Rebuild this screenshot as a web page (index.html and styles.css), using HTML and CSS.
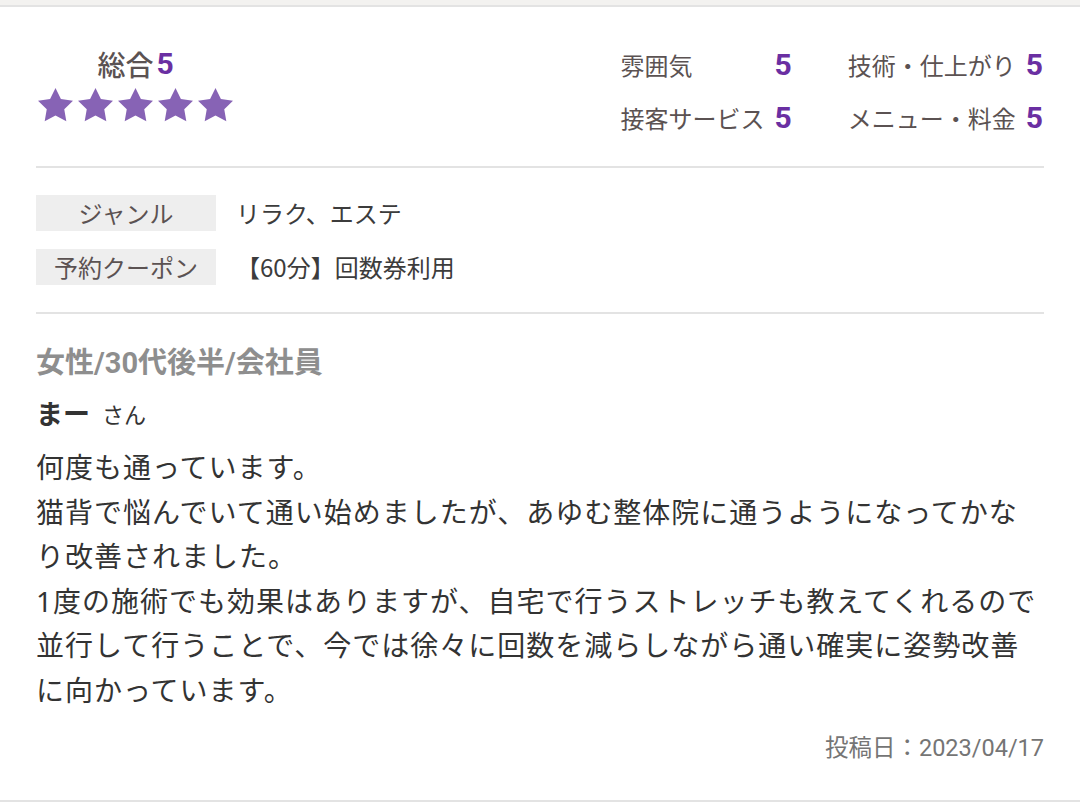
FILE: index.html
```html
<!DOCTYPE html>
<html lang="ja">
<head>
<meta charset="utf-8">
<title>口コミ</title>
<link rel="stylesheet" href="styles.css">
</head>
<body>
<div class="topbar"></div>
<article class="card">
  <section class="summary">
    <div class="overall">
      <div class="total"><span class="tlabel">総合</span><span class="num">5</span></div>
      <div class="stars">
        <svg class="star" viewBox="2 2 20 20"><polygon points="12,2 15.09,8.26 22,9.27 17,14.14 18.18,21.02 12,17.77 5.82,21.02 7,14.14 2,9.27 8.91,8.26"/></svg>
        <svg class="star" viewBox="2 2 20 20"><polygon points="12,2 15.09,8.26 22,9.27 17,14.14 18.18,21.02 12,17.77 5.82,21.02 7,14.14 2,9.27 8.91,8.26"/></svg>
        <svg class="star" viewBox="2 2 20 20"><polygon points="12,2 15.09,8.26 22,9.27 17,14.14 18.18,21.02 12,17.77 5.82,21.02 7,14.14 2,9.27 8.91,8.26"/></svg>
        <svg class="star" viewBox="2 2 20 20"><polygon points="12,2 15.09,8.26 22,9.27 17,14.14 18.18,21.02 12,17.77 5.82,21.02 7,14.14 2,9.27 8.91,8.26"/></svg>
        <svg class="star" viewBox="2 2 20 20"><polygon points="12,2 15.09,8.26 22,9.27 17,14.14 18.18,21.02 12,17.77 5.82,21.02 7,14.14 2,9.27 8.91,8.26"/></svg>
      </div>
    </div>
    <div class="ratings">
      <span class="rlabel">雰囲気</span><span class="rnum">5</span>
      <span class="rlabel col2">技術・仕上がり</span><span class="rnum">5</span>
      <span class="rlabel">接客サービス</span><span class="rnum">5</span>
      <span class="rlabel col2">メニュー・料金</span><span class="rnum">5</span>
    </div>
  </section>
  <section class="details">
    <div class="dlabel">ジャンル</div><div class="dvalue">リラク、エステ</div>
    <div class="dlabel">予約クーポン</div><div class="dvalue">【60分】回数券利用</div>
  </section>
  <section class="review">
    <div class="attr">女性/30代後半/会社員</div>
    <div class="name"><span class="nick">まー</span><span class="san">さん</span></div>
    <p class="body">何度も通っています。<br>猫背で悩んでいて通い始めましたが、あゆむ整体院に通うようになってかなり改善されました。<br>1度の施術でも効果はありますが、自宅で行うストレッチも教えてくれるので並行して行うことで、今では徐々に回数を減らしながら通い確実に姿勢改善に向かっています。</p>
    <div class="date">投稿日：2023/04/17</div>
  </section>
</article>
</body>
</html>
```

FILE: styles.css
```css
html, body {
  margin: 0;
  padding: 0;
  background: #ffffff;
}
body {
  font-family: Roboto, "Noto Sans CJK JP", sans-serif;
  color: #333333;
}
.topbar {
  height: 5px;
  background: #f3f2f0;
}
.card {
  border-top: 2px solid #e3e3e3;
  border-bottom: 2px solid #e3e3e3;
  padding: 0 36px;
}
.summary {
  display: flex;
  justify-content: space-between;
  align-items: flex-start;
  height: 76px;
  padding: 40px 0 43px 0;
  border-bottom: 2px solid #e3e3e3;
}
.overall {
  display: flex;
  flex-direction: column;
  align-items: center;
  margin-left: 2px;
}
.total {
  display: flex;
  align-items: center;
  height: 34px;
  overflow: visible;
}
.tlabel {
  font-family: "Noto Sans CJK JP", sans-serif;
  font-size: 28px;
  line-height: 34px;
  font-weight: 500;
  color: #5b5252;
}
.num {
  font-family: Roboto, sans-serif;
  font-size: 30px;
  line-height: 34px;
  font-weight: 700;
  color: #6a2fa2;
  margin-left: 3px;
}
.stars {
  display: flex;
  gap: 5px;
  margin-top: 7px;
}
.star {
  width: 35px;
  height: 35px;
  fill: #8763b5;
  display: block;
}
.ratings {
  display: grid;
  grid-template-columns: auto auto auto auto;
  grid-auto-rows: 36px;
  row-gap: 17px;
  column-gap: 10px;
  margin-right: 1px;
}
.rlabel {
  font-family: "Noto Sans CJK JP", sans-serif;
  font-size: 24px;
  line-height: 36px;
  color: #5b5252;
}
.rlabel.col2 {
  margin-left: 46px;
}
.rnum {
  font-family: Roboto, sans-serif;
  font-weight: 700;
  font-size: 30px;
  line-height: 36px;
  color: #6a2fa2;
  text-align: right;
}
.details {
  display: grid;
  grid-template-columns: 180px 1fr;
  grid-auto-rows: 36px;
  column-gap: 20px;
  row-gap: 18px;
  padding: 27px 0;
  border-bottom: 2px solid #e3e3e3;
}
.dlabel {
  background: #eeeeee;
  text-align: center;
  font-family: "Noto Sans CJK JP", sans-serif;
  font-size: 24px;
  line-height: 36px;
  color: #5b5252;
}
.dvalue {
  font-family: "Noto Sans CJK JP", sans-serif;
  font-size: 24px;
  line-height: 36px;
  color: #3c3c3c;
}
.review {
  padding: 31px 0 37px 0;
}
.attr {
  height: 36px;
  font-family: Roboto, "Noto Sans CJK JP", sans-serif;
  font-size: 29px;
  line-height: 36px;
  font-weight: 700;
  color: #8e8e8e;
}
.name {
  display: flex;
  align-items: center;
  height: 36px;
  margin-top: 14px;
}
.nick {
  font-family: "Noto Sans CJK JP", sans-serif;
  font-size: 27px;
  line-height: 36px;
  font-weight: 700;
  color: #333333;
}
.san {
  font-family: "Noto Sans CJK JP", sans-serif;
  font-size: 22px;
  line-height: 36px;
  font-weight: 400;
  margin-left: 12px;
  color: #333333;
}
.body {
  margin: 14px 0 0 0;
  font-family: "Noto Sans", "Noto Sans CJK JP", sans-serif;
  font-size: 28px;
  letter-spacing: 1px;
  line-height: 44.6px;
  color: #333333;
}
.date {
  height: 30px;
  margin-top: 20px;
  text-align: right;
  font-family: Roboto, "Noto Sans CJK JP", sans-serif;
  font-size: 23.5px;
  line-height: 30px;
  color: #757575;
}
```
